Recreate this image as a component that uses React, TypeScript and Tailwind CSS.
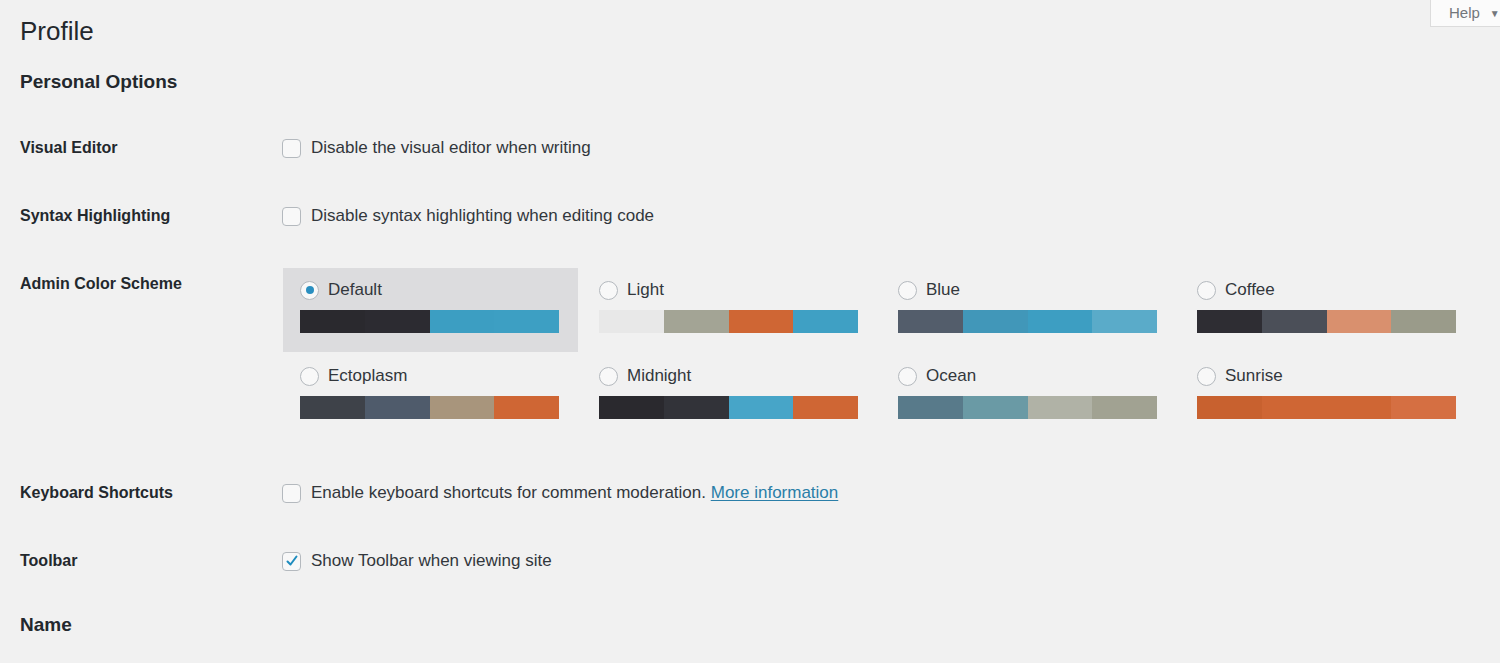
import React from 'react';

type Scheme = { name: string; colors: string[]; selected?: boolean };

const schemes: Scheme[] = [
  { name: 'Default', colors: ['#2a292e', '#2c2b31', '#3c9ec2', '#3d9fc3'], selected: true },
  { name: 'Light', colors: ['#e8e8e8', '#a3a495', '#cf6634', '#3fa0c4'] },
  { name: 'Blue', colors: ['#535d6b', '#4197b9', '#3d9ec2', '#5aabc9'] },
  { name: 'Coffee', colors: ['#2e2d33', '#4b4f58', '#d9906e', '#9a9b8a'] },
  { name: 'Ectoplasm', colors: ['#3e4249', '#4f5b6b', '#a8957c', '#cf6634'] },
  { name: 'Midnight', colors: ['#2a292e', '#323339', '#47a5c8', '#cf6634'] },
  { name: 'Ocean', colors: ['#587a8a', '#6a9aa5', '#b0b2a6', '#a1a292'] },
  { name: 'Sunrise', colors: ['#c8612f', '#cf6634', '#cf6634', '#d56f42'] },
];

function Checkbox({ checked }: { checked?: boolean }) {
  return (
    <span className="flex items-center justify-center w-[19px] h-[19px] rounded-[4px] border border-[#b4b9be] bg-[#f8f8f8] shrink-0">
      {checked && (
        <svg width="14" height="14" viewBox="0 0 14 14" fill="none">
          <path d="M2.5 7.5 L5.5 10.5 L11.5 2.5" stroke="#1e8cbe" strokeWidth="2" strokeLinecap="round" strokeLinejoin="round" />
        </svg>
      )}
    </span>
  );
}

function Radio({ checked }: { checked?: boolean }) {
  return (
    <span className="flex items-center justify-center w-[19px] h-[19px] rounded-full border border-[#b4b9be] bg-[#f8f8f8] shrink-0">
      {checked && <span className="w-[8px] h-[8px] rounded-full bg-[#2a8fc0]" />}
    </span>
  );
}

function Row({ label, children }: { label: string; children: React.ReactNode }) {
  return (
    <div className="grid grid-cols-[262px_1fr]">
      <div className="pt-6 pb-6 leading-5 text-[16px] font-semibold text-[#23282d]">{label}</div>
      <div className="pt-6 pb-6">{children}</div>
    </div>
  );
}

export default function App() {
  return (
    <div className="relative min-h-[663px] bg-[#f1f1f1] pl-5 text-[#32373c] overflow-hidden" style={{ fontFamily: '"Liberation Sans", Arial, sans-serif' }}>
      <div className="absolute top-0 right-0 w-[70px] h-[27px] bg-[#fbfbfb] border-l border-b border-[#dcdcdc] flex items-center pl-[18px] gap-[10px] text-[15px] text-[#72777c]">
        <span>Help</span>
        <span className="text-[10px]">▼</span>
      </div>

      <h1 className="pt-4 text-[26px] leading-[30px] text-[#23282d]">Profile</h1>
      <h2 className="mt-6 text-[19px] leading-6 font-semibold text-[#23282d]">Personal Options</h2>

      <div className="mt-[20px]">
        <Row label="Visual Editor">
          <label className="flex items-center gap-[10px] h-5 text-[17px]">
            <Checkbox />
            Disable the visual editor when writing
          </label>
        </Row>
        <Row label="Syntax Highlighting">
          <label className="flex items-center gap-[10px] h-5 text-[17px]">
            <Checkbox />
            Disable syntax highlighting when editing code
          </label>
        </Row>

        <div className="grid grid-cols-[262px_1fr]">
          <div className="pt-6 leading-5 text-[16px] font-semibold text-[#23282d]">Admin Color Scheme</div>
          <div className="pt-[18px] pb-[21px]">
            <div className="ml-px grid grid-cols-[repeat(4,295px)] gap-x-1 gap-y-[2px]">
              {schemes.map((s) => (
                <div
                  key={s.name}
                  className={
                    'h-[84px] pt-3 pl-[17px] pr-[19px] ' + (s.selected ? 'bg-[#dcdcde]' : '')
                  }
                >
                  <div className="flex items-center gap-[9px] h-5 text-[17px]">
                    <Radio checked={s.selected} />
                    {s.name}
                  </div>
                  <div className="mt-[10px] flex h-[23px]">
                    {s.colors.map((c, i) => (
                      <div key={i} className="flex-1" style={{ backgroundColor: c }} />
                    ))}
                  </div>
                </div>
              ))}
            </div>
          </div>
        </div>

        <Row label="Keyboard Shortcuts">
          <label className="flex items-center gap-[10px] h-5 text-[17px]">
            <Checkbox />
            <span>
              Enable keyboard shortcuts for comment moderation.{' '}
              <a href="#" className="text-[#2a7ea8] underline underline-offset-2">More information</a>
            </span>
          </label>
        </Row>
        <Row label="Toolbar">
          <label className="flex items-center gap-[10px] h-5 text-[17px]">
            <Checkbox checked />
            Show Toolbar when viewing site
          </label>
        </Row>
      </div>

      <h2 className="mt-[18px] text-[19px] leading-6 font-semibold text-[#23282d]">Name</h2>
    </div>
  );
}
